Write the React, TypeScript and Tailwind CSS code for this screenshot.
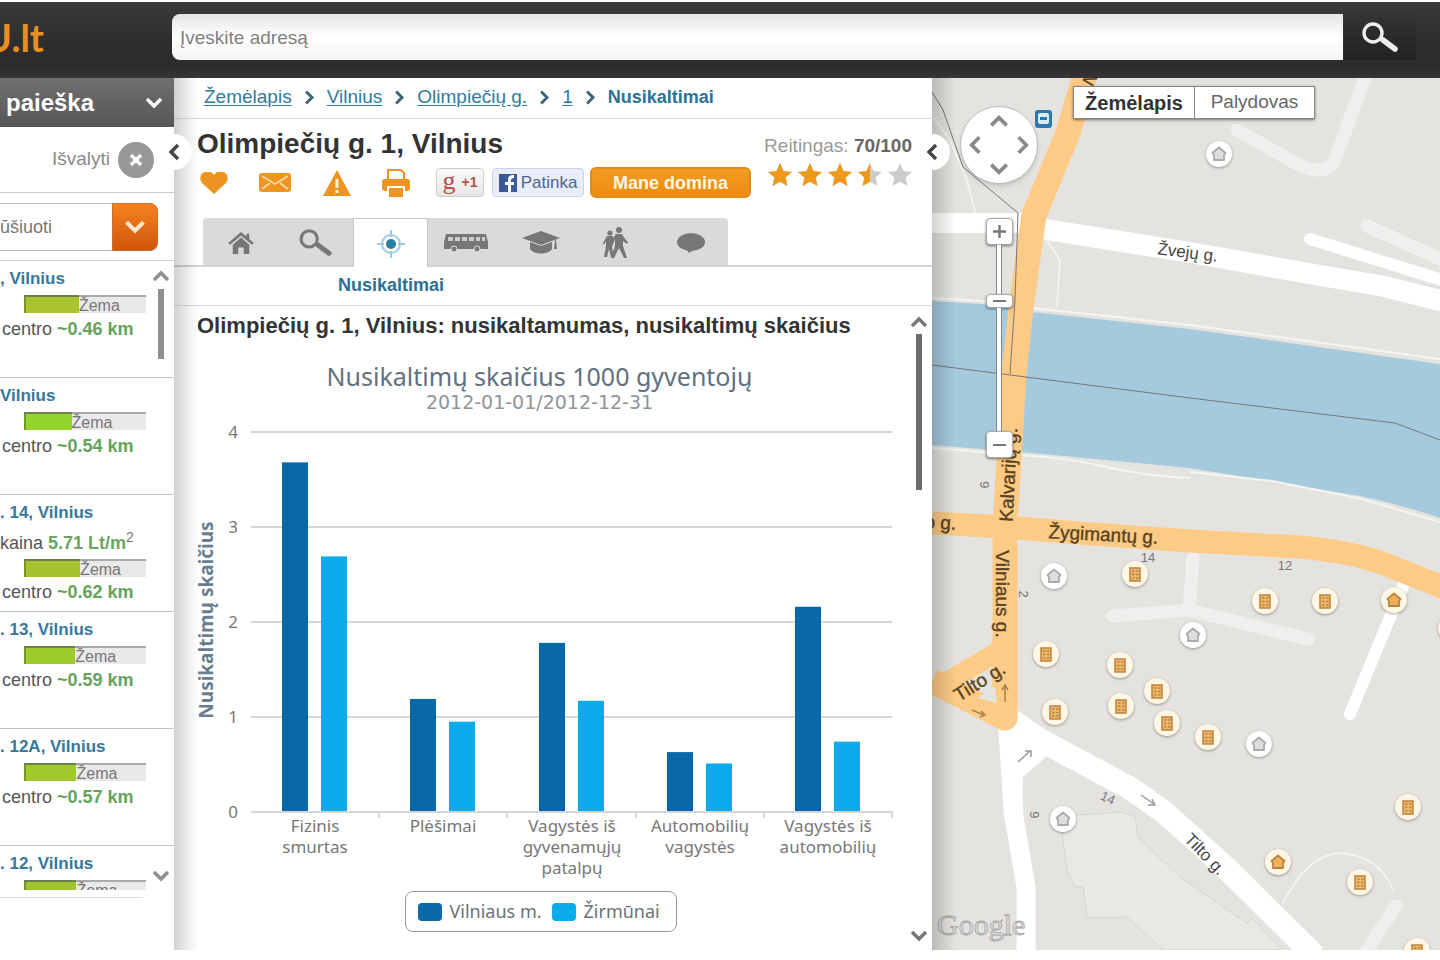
import type { ReactNode } from 'react'

interface Listing {
  title: string
  price?: string
  distance: string
  level: number
  color: string
}

const listings: Listing[] = [
  { title: ', Vilnius', distance: '~0.46 km', level: 45, color: '#aac42e' },
  { title: 'Vilnius', distance: '~0.54 km', level: 39, color: '#93d52c' },
  { title: '. 14, Vilnius', price: '5.71 Lt/m', distance: '~0.62 km', level: 46, color: '#a6c32f' },
  { title: '. 13, Vilnius', distance: '~0.59 km', level: 42, color: '#9ccb2c' },
  { title: '. 12A, Vilnius', distance: '~0.57 km', level: 43, color: '#9fc92d' },
  { title: '. 12, Vilnius', distance: '', level: 43, color: '#9fc42f' },
]

const crimes = [
  { label: ['Fizinis', 'smurtas'], city: 3.67, district: 2.68 },
  { label: ['Plėšimai'], city: 1.18, district: 0.94 },
  { label: ['Vagystės iš', 'gyvenamųjų', 'patalpų'], city: 1.77, district: 1.16 },
  { label: ['Automobilių', 'vagystės'], city: 0.62, district: 0.5 },
  { label: ['Vagystės iš', 'automobilių'], city: 2.15, district: 0.73 },
]

type PinKind = 'flat' | 'house' | 'sold'

const pins: { x: number; y: number; kind: PinKind }[] = [
  { x: 287, y: 76, kind: 'sold' },
  { x: 122, y: 498, kind: 'sold' },
  { x: 203, y: 496, kind: 'flat' },
  { x: 333, y: 523, kind: 'flat' },
  { x: 393, y: 523, kind: 'flat' },
  { x: 462, y: 522, kind: 'house' },
  { x: 261, y: 557, kind: 'sold' },
  { x: 114, y: 576, kind: 'flat' },
  { x: 188, y: 587, kind: 'flat' },
  { x: 225, y: 613, kind: 'flat' },
  { x: 189, y: 628, kind: 'flat' },
  { x: 123, y: 634, kind: 'flat' },
  { x: 235, y: 645, kind: 'flat' },
  { x: 276, y: 659, kind: 'flat' },
  { x: 327, y: 666, kind: 'sold' },
  { x: 476, y: 729, kind: 'flat' },
  { x: 131, y: 741, kind: 'sold' },
  { x: 346, y: 784, kind: 'house' },
  { x: 428, y: 804, kind: 'flat' },
  { x: 485, y: 873, kind: 'flat' },
  { x: 519, y: 550, kind: 'flat' },
]

function Chevron({ dir, size = 18, className = '' }: { dir: 'up' | 'down' | 'left' | 'right'; size?: number; className?: string }) {
  const paths = {
    up: 'M3 14l7-7 7 7',
    down: 'M3 6l7 7 7-7',
    left: 'M14 3l-7 7 7 7',
    right: 'M6 3l7 7-7 7',
  }
  return (
    <svg width={size} height={size} viewBox="0 0 20 20" fill="none" stroke="currentColor" strokeWidth="3.4" className={`shrink-0 ${className}`} aria-hidden="true">
      <path d={paths[dir]} />
    </svg>
  )
}

function Magnifier({ className = '' }: { className?: string }) {
  return (
    <svg viewBox="0 0 36 30" fill="none" stroke="currentColor" className={className} aria-hidden="true">
      <circle cx="11" cy="11" r="9" strokeWidth="3.4" />
      <path d="M18 16l4 3" strokeWidth="3.4" />
      <path d="M21 18l12 9" strokeWidth="5.6" strokeLinecap="round" />
    </svg>
  )
}

function Header() {
  return (
    <header className="flex h-[76px] shrink-0 items-start bg-linear-to-b from-[#3b3b3b] via-[#2e2e2e] to-[#2b2b2b] pt-3 shadow-[inset_0_-12px_8px_-8px_#3a3a3a]">
      <div className="flex w-[172px] shrink-0">
        <a href="#home" className="flex w-[44px] justify-end overflow-hidden font-[Lato,sans-serif] text-[38px] leading-[46px] font-bold text-[#e98e22]">
          U.lt
        </a>
      </div>
      <form className="flex min-w-0 flex-1 pr-6" onSubmit={(e) => e.preventDefault()}>
        <input
          type="text"
          aria-label="Adresas"
          placeholder="Įveskite adresą"
          className="h-[46px] min-w-0 flex-1 rounded-l-lg bg-linear-to-b from-[#e4e4e4] via-white to-[#f4f4f4] px-2 pt-[2px] text-[19px] text-gray-700 placeholder:text-[#808080]"
        />
        <button type="submit" aria-label="Ieškoti" className="ml-px flex h-[46px] w-[72px] items-center rounded-r bg-linear-to-b from-[#333] to-[#222] pl-[18px] text-[#eee]">
          <Magnifier className="h-[30px] w-9" />
        </button>
      </form>
    </header>
  )
}

function ListingRow({ item }: { item: Listing }) {
  return (
    <li className="h-[117px] shrink-0 border-b border-[#c4c4c4] text-[18px] leading-5 whitespace-nowrap text-[#555]">
      <a href="#listing" className="block pt-2 text-[17px] leading-5 font-bold text-[#36789c]">{item.title}</a>
      {item.price && (
        <p className="flex h-[30px] items-end">
          <span>kaina&nbsp;</span>
          <b className="text-[#6aa55f]">{item.price}<sup className="text-[14px] font-normal text-[#777]">2</sup></b>
        </p>
      )}
      <div className="mt-[6px] ml-6 flex h-[18px] w-[122px] border-t-2 border-[#aaa] bg-[#e9e9e9]">
        <div className="h-full border-l-2 border-black/25 shadow-[0_-2px_0_rgba(60,90,0,0.55)]" style={{ width: `${item.level}%`, backgroundColor: item.color }} />
        <span className="text-[16px] leading-[17px] text-[#777]">Žema</span>
      </div>
      {item.distance && (
        <p className={`pl-[2px] ${item.price ? 'mt-[5px]' : 'mt-[6px]'}`}>
          centro <b className="text-[#64a35a]">{item.distance}</b>
        </p>
      )}
    </li>
  )
}

function Sidebar() {
  return (
    <aside className="flex min-h-0 flex-col overflow-hidden bg-white">
      <button type="button" className="flex h-[49px] shrink-0 items-center justify-between bg-linear-to-b from-[#707070] to-[#565656] pr-[10px] pl-[6px] text-[24px] font-bold text-white">
        paieška
        <Chevron dir="down" size={20} />
      </button>
      <div className="flex h-[66px] shrink-0 items-center justify-end border-b border-[#ccc] pr-5">
        <button type="button" className="flex items-center gap-2 text-[19px] text-[#8a8a8a]">
          Išvalyti
          <span className="flex size-9 items-center justify-center rounded-full bg-[#989898]">
            <svg width="12" height="12" viewBox="0 0 12 12" stroke="#fff" strokeWidth="3.4" aria-hidden="true">
              <path d="M1 1l10 10M11 1L1 11" />
            </svg>
          </span>
        </button>
      </div>
      <div className="flex h-[68px] shrink-0 border-b border-[#d0d0d0] pt-[10px]">
        <div className="relative -ml-4 h-[48px] w-[174px]">
          <select aria-label="Rūšiuoti" className="h-full w-full appearance-none rounded-r-lg border border-[#bbb] bg-white pl-[2px] text-[18px] text-[#777]">
            <option>Rūšiuoti</option>
          </select>
          <span className="pointer-events-none absolute inset-y-0 right-0 flex w-[46px] items-center justify-center rounded-r-lg border border-[#c9702a] bg-linear-to-b from-[#f58220] to-[#cf560c] text-[#ffe9cc]">
            <Chevron dir="down" size={24} />
          </span>
        </div>
      </div>
      <div className="relative min-h-0 flex-1 overflow-hidden">
        <ul className="flex flex-col">
          {listings.map((item) => (
            <ListingRow key={item.title} item={item} />
          ))}
        </ul>
        <div className="absolute inset-y-0 right-1 flex w-[18px] flex-col items-center justify-between pt-[5px] pb-1 text-[#8f8f8f]">
          <div className="flex flex-col items-center gap-[3px]">
            <Chevron dir="up" size={20} />
            <div className="h-[70px] w-[6px] bg-[#8f8f8f]" />
          </div>
          <Chevron dir="down" size={20} />
        </div>
      </div>
      <div className="h-[60px] shrink-0 pt-[7px]">
        <div className="mr-[31px] border-t border-[#ddd]" />
      </div>
    </aside>
  )
}

function CollapseHandle({ label }: { label: string }) {
  return (
    <button type="button" aria-label={label} className="absolute top-[56px] -left-[18px] z-20 flex size-9 items-center justify-center rounded-full bg-white text-[#444]">
      <Chevron dir="left" size={20} />
    </button>
  )
}

function EdgeShadow() {
  return <div className="pointer-events-none absolute inset-y-0 left-0 z-10 w-6 bg-linear-to-r from-black/18 to-transparent" />
}

function Breadcrumbs() {
  const items = ['Žemėlapis', 'Vilnius', 'Olimpiečių g.', '1']
  return (
    <nav className="flex h-[41px] shrink-0 items-center gap-[9px] border-b border-[#ddd] pb-[2px] pl-[30px] text-[19px] whitespace-nowrap text-[#2f7b9b]">
      {items.map((item) => (
        <span key={item} className="flex items-center gap-[9px]">
          <a href="#crumb" className="underline underline-offset-2">{item}</a>
          <Chevron dir="right" size={17} className="text-[#3d6478]" />
        </span>
      ))}
      <b className="text-[18px] text-[#2a7396]">Nusikaltimai</b>
    </nav>
  )
}

const STAR = 'M12 0l3.5 8 8.500.9-6.400 5.700 1.900 8.400L12 18.700 4.500 23l1.900-8.400L0 8.900 8.500 8z'

function Rating() {
  return (
    <div className="flex flex-col items-end gap-[5px] pt-[15px]">
      <p className="text-[19px] leading-6 text-[#999]">
        Reitingas: <b className="text-[#666]">70/100</b>
      </p>
      <div className="flex gap-[6px]" role="img" aria-label="3.5 / 5">
        {[1, 1, 1, 0.5, 0].map((fill, i) => (
          <svg key={i} width="24" height="24" viewBox="0 0 24 24" aria-hidden="true">
            <path d={STAR} fill="#ccc" />
            {fill > 0 && <path d={fill === 1 ? STAR : 'M12 0v18.700L4.500 23l1.900-8.400L0 8.900 8.500 8z'} fill="#ee991c" />}
          </svg>
        ))}
      </div>
    </div>
  )
}

function Actions() {
  return (
    <div className="flex h-[31px] items-center">
      <div className="flex w-[239px] items-center justify-between pr-[26px] pl-[3px] text-[#ee9420]">
        <button type="button" aria-label="Įsiminti">
          <svg width="28" height="24" viewBox="0 0 28 24" fill="currentColor"><path d="M14 23L2 12C-1 8 0 2 5 1h5c2 0 3 2 4 3 1-1 2-3 4-3h5c5 1 6 7 3 11z" /></svg>
        </button>
        <button type="button" aria-label="Siųsti">
          <svg width="32" height="19" viewBox="0 0 32 19"><rect width="32" height="19" rx="3" fill="currentColor" /><path d="M3 3l13 8 13-8M3 16l8-6M29 16l-8-6" fill="none" stroke="#ffd9a0" strokeWidth="1.8" /></svg>
        </button>
        <button type="button" aria-label="Pranešti">
          <svg width="28" height="26" viewBox="0 0 28 26"><path d="M14 0l14 26H0z" fill="currentColor" /><path d="M14 9v9M14 20v3" stroke="#fff0d0" strokeWidth="3" /></svg>
        </button>
        <button type="button" aria-label="Spausdinti">
          <svg width="28" height="30" viewBox="0 0 28 30"><path d="M6 12V2h13l3 3v7" fill="#fff" stroke="currentColor" strokeWidth="2" /><rect y="11" width="28" height="12" rx="3" fill="currentColor" /><rect x="5" y="18" width="18" height="12" fill="#fff" /><rect x="7" y="20" width="14" height="9" fill="currentColor" /></svg>
        </button>
      </div>
      <button type="button" className="mr-2 flex h-[29px] w-[48px] items-center justify-center gap-[6px] rounded border border-[#ccc] bg-linear-to-b from-[#fafafa] to-[#e6e6e6] text-[14px] font-bold text-[#b2504a]">
        <span className="pb-1 font-['Liberation_Serif',serif] text-[26px] leading-6 font-normal">g</span>+1
      </button>
      <button type="button" className="mr-[6px] flex h-[29px] w-[92px] items-center justify-center gap-1 rounded border border-[#ccd4e8] bg-[#e9edf8] text-[17px] text-[#4f6395]">
        <svg width="18" height="18" viewBox="0 0 18 18" aria-hidden="true"><rect width="18" height="18" fill="#3b5998" /><path d="M12 18v-7h3v-3h-3V6c0-1 1-2 3-2V1c-4 0-6 1-6 5v2H6v3h3v7z" fill="#fff" /></svg>
        Patinka
      </button>
      <button type="button" className="h-[31px] w-[161px] rounded-md border-2 border-[#e08a1c] bg-linear-to-b from-[#f49c22] to-[#ee8c0c] text-[18px] leading-6 font-bold text-[#fff6e2]">
        Mane domina
      </button>
    </div>
  )
}

function TabIcon({ name }: { name: string }): ReactNode {
  switch (name) {
    case 'home':
      return <svg width="26" height="22" viewBox="0 0 28 24" fill="currentColor"><path d="M14 0L0 12l2 2L14 4l12 10 2-2-5-4.500V2h-3v3z" /><path d="M14 6L5 14v10h6v-7h6v7h6V14z" /></svg>
    case 'search':
      return <Magnifier className="h-[27px] w-[33px]" />
    case 'crime':
      return <svg width="28" height="28" viewBox="0 0 28 28" fill="none" stroke="#9dcbe3" strokeWidth="2"><circle cx="14" cy="14" r="9" /><path d="M14 0v7M14 21v7M0 14h7M21 14h7" /><circle cx="14" cy="14" r="5" fill="#2b7ea6" stroke="none" /></svg>
    case 'transport':
      return <svg width="44" height="18" viewBox="0 0 44 18"><path d="M2 0h40l2 8v7H0V8z" fill="currentColor" /><path d="M4 3h5v4H4zM11 3h5v4h-5zM18 3h5v4h-5zM25 3h5v4h-5zM32 3h4v4h-4zM38 3h3v4h-3z" fill="#ccc" /><g fill="currentColor" stroke="#ddd"><circle cx="10" cy="15" r="3" /><circle cx="33" cy="15" r="3" /></g></svg>
    case 'school':
      return <svg width="38" height="24" viewBox="0 0 38 24" fill="currentColor"><path d="M19 0l19 7-19 7L0 7z" /><path d="M8 11l11 4 11-4v7c-4 6-18 6-22 0z" /><path d="M33 9h1l1 9h-3z" /></svg>
    case 'people':
      return <svg width="26" height="32" viewBox="0 0 26 32" fill="currentColor"><circle cx="16" cy="3" r="3" /><path d="M13 7h6l3 5 3 3-1 2-4-3v5l4 12h-3l-5-10-5 10H8l4-12V13l-3 4-2-1z" /><circle cx="7" cy="6" r="2.600" /><path d="M4 9h6l1 6-2 5 2 10H8L6 22 4 30H1l2-11v-5l-2 4-1-2z" /></svg>
    default:
      return <svg width="28" height="20" viewBox="0 0 28 20" fill="currentColor"><ellipse cx="14" cy="9" rx="14" ry="9" /><path d="M9 15l9 1-6 4z" /></svg>
  }
}

function Tabs() {
  const tabs = [
    { id: 'home', label: 'Apžvalga' },
    { id: 'search', label: 'Paieška' },
    { id: 'crime', label: 'Nusikaltimai' },
    { id: 'transport', label: 'Transportas' },
    { id: 'school', label: 'Mokyklos' },
    { id: 'people', label: 'Gyventojai' },
    { id: 'comments', label: 'Komentarai' },
  ]
  return (
    <div className="flex h-[49px] shrink-0 border-b-2 border-[#d4d4d4] pl-[29px]" role="tablist">
      {tabs.map((tab, i) => (
        <button
          key={tab.id}
          type="button"
          role="tab"
          aria-label={tab.label}
          aria-selected={tab.id === 'crime'}
          className={`flex w-[75px] items-center justify-center pt-[2px] text-[#777] ${
            tab.id === 'crime' ? 'h-[49px] border border-b-0 border-[#c8c8c8] bg-white' : 'h-[47px] bg-[#dadada]'
          } ${i === 0 ? 'rounded-tl' : ''} ${i === tabs.length - 1 ? 'rounded-tr' : ''}`}
        >
          <TabIcon name={tab.id} />
        </button>
      ))}
    </div>
  )
}

const CHART_LEFT = 54
const CHART_RIGHT = 695
const BASELINE = 396
const UNIT = 95

function Chart() {
  const step = (CHART_RIGHT - CHART_LEFT) / crimes.length
  return (
    <svg viewBox="0 0 709 472" className="block w-full font-['Noto_Sans',sans-serif]" role="img" aria-label="Nusikaltimų skaičius">
      {[4, 3, 2, 1, 0].map((n) => (
        <g key={n}>
          <line x1={CHART_LEFT} x2={CHART_RIGHT} y1={BASELINE - n * UNIT + 1} y2={BASELINE - n * UNIT + 1} stroke="#d6d6d6" strokeWidth="2" />
          <text x="36" y={BASELINE - n * UNIT + 7} textAnchor="middle" fontSize="17" fill="#777">{n}</text>
        </g>
      ))}
      <text transform="translate(16 205) rotate(-90)" textAnchor="middle" fontSize="19" fontWeight="bold" fill="#6a7d90">
        Nusikaltimų skaičius
      </text>
      {crimes.map((c, i) => {
        const center = Math.round(CHART_LEFT + step * (i + 0.5))
        return (
          <g key={i}>
            <rect x={center - 33} y={BASELINE - c.city * UNIT} width="26" height={c.city * UNIT} fill="#0a69a8" />
            <rect x={center + 6} y={BASELINE - c.district * UNIT} width="26" height={c.district * UNIT} fill="#0aabea" />
            <path d={`M${Math.round(CHART_LEFT + step * (i + 1))} ${BASELINE}v7`} stroke="#d6d6d6" strokeWidth="2" />
            <text textAnchor="middle" fontSize="17" fill="#777">
              {c.label.map((line, n) => (
                <tspan key={line} x={center} y={417 + n * 21}>{line}</tspan>
              ))}
            </text>
          </g>
        )
      })}
    </svg>
  )
}

function Details() {
  return (
    <main className="relative flex min-h-0 flex-col bg-white">
      <EdgeShadow />
      <CollapseHandle label="Suskleisti sąrašą" />
      <Breadcrumbs />
      <section className="flex h-[99px] shrink-0 justify-between pr-[20px] pl-[23px]">
        <div className="pt-[9px]">
          <h1 className="mb-[7px] text-[28px] leading-8 font-bold whitespace-nowrap text-[#333]">Olimpiečių g. 1, Vilnius</h1>
          <Actions />
        </div>
        <Rating />
      </section>
      <Tabs />
      <div className="flex h-[39px] shrink-0 items-center border-b border-[#ddd] pb-[2px] pl-[164px]">
        <b className="text-[18px] text-[#2c7093]">Nusikaltimai</b>
      </div>
      <section className="flex min-h-0 flex-1 overflow-hidden">
        <div className="min-w-0 flex-1 pl-[23px]">
          <h2 className="pt-[7px] text-[22px] leading-[26px] font-bold whitespace-nowrap text-[#333]">
            Olimpiečių g. 1, Vilnius: nusikaltamumas, nusikaltimų skaičius
          </h2>
          <div className="pt-[22px] pr-[24px] text-center font-['Noto_Sans',sans-serif]">
            <h3 className="text-[25px] leading-[30px] text-[#62717f]">Nusikaltimų skaičius 1000 gyventojų</h3>
            <p className="pb-[2px] font-['DejaVu_Sans',sans-serif] text-[19px] leading-[22px] text-[#8f9499]">2012-01-01/2012-12-31</p>
          </div>
          <Chart />
          <div className="flex justify-center pt-1 pr-[22px]">
            <ul className="flex h-[41px] w-[272px] items-center gap-[10px] rounded-lg border border-[#999] pl-3 font-['Noto_Sans',sans-serif] text-[18px] text-[#6b7278]">
              <li className="flex items-center gap-2"><span className="h-[18px] w-6 rounded-sm bg-[#0a69a8]" />Vilniaus m.</li>
              <li className="flex items-center gap-2"><span className="h-[18px] w-6 rounded-sm bg-[#0aabea]" />Žirmūnai</li>
            </ul>
          </div>
        </div>
        <div className="flex w-[26px] shrink-0 flex-col items-center justify-between py-1 text-[#777]">
          <div className="flex flex-col items-center gap-[2px] pt-[2px]">
            <Chevron dir="up" size={20} />
            <div className="h-[156px] w-[6px] bg-[#6c6c6c]" />
          </div>
          <Chevron dir="down" size={20} />
        </div>
      </section>
    </main>
  )
}

function Pin({ kind }: { kind: PinKind }) {
  const stroke = kind === 'sold' ? '#aaa' : '#b98242'
  return (
    <svg width="26" height="26" viewBox="0 0 26 26" aria-hidden="true">
      {kind === 'flat' ? (
        <g stroke={stroke} strokeWidth="1.500">
          <rect x="8" y="7" width="10" height="13" fill="#efb868" />
          <path d="M10 10h2.500M14 10h2.500M10 13.500h2.500M14 13.500h2.500M10 17h2.500M14 17h2.500" />
        </g>
      ) : (
        <path d="M13 6.500l6.500 5.500-1.500 2V19H8v-5l-1.500-2z" fill={kind === 'sold' ? '#ddd' : '#efb057'} stroke={stroke} strokeWidth="1.800" strokeLinejoin="round" />
      )}
    </svg>
  )
}

function MapCanvas() {
  return (
    <svg className="absolute inset-0 h-full w-full font-['Liberation_Sans',Arial,sans-serif]" fill="none" aria-hidden="true">
      <path d="M0 223L50 226 100 234 258 251 508 286V440Q470 427 428 418L258 390 100 375 0 367z" fill="#a5cade" />
      <path d="M0 220L50 223 100 230 258 247 508 281M0 370L100 378Q140 381 170 388 220 399 258 400M258 394L340 403 430 421 508 444" stroke="#f5f4f1" strokeWidth="2" />
      <path d="M145 737L190 734 203 739 206 759 248 799 291 829 315 845 320 840 351 872H231L195 839 155 840 151 809 143 809 135 792 130 755z" fill="#e8e8e4" stroke="#d6d4d0" />
      <g stroke="#f0efee" strokeWidth="13" strokeLinecap="round" strokeLinejoin="round">
        <path d="M305 52L365 86Q393 100 403 82L412 57 432 2M435 148L508 181M261 480L257 532M181 538L257 532 376 561M464 828L432 876" />
      </g>
      <path d="M351 825Q375 777 408 775 448 778 461 812M1 39L18 62 35 102 43 135M113 160L128 182 125 229" stroke="#f4f3f0" strokeWidth="2" />
      <g stroke="#fff" strokeLinejoin="round">
        <path d="M0 145H96" strokeWidth="20" />
        <path d="M105 150L255 174 380 196 450 208 510 223" strokeWidth="21" />
        <path d="M378 161L510 202M471 508L418 636" strokeWidth="12" strokeLinecap="round" />
        <path d="M76 640L108 662 198 710 232 734 291 787 383 878" strokeWidth="23" />
        <path d="M78 660L82 739 94 809V880" strokeWidth="19" />
        <path d="M66 645L80 636 116 677 91 699 90 740 72 740z" fill="#fff" stroke="none" />
      </g>
      <g stroke="#fdcb85" strokeLinejoin="round">
        <path d="M0 445L73 449 160 456 258 463 368 469Q420 474 450 485L515 511" strokeWidth="23" />
        <path d="M155 -10L136 55 102 137 90 222 82 295 76 400 73 450V640L0 603" strokeWidth="25" />
        <path d="M10 607L72 570" strokeWidth="20" />
      </g>
      <path d="M45 620L63 609 65 625z" fill="#e5e3df" />
      <g stroke="#777" strokeWidth="1">
        <path d="M0 14L11 32 31 89 86 135 83 222 78 296M0 287L258 320 463 345 508 362" />
      </g>
      <g stroke="#a8834f" strokeWidth="1.500">
        <path d="M73 624V608M70 612L73 607 76 612M40 632L52 637M49 633L53 637 48 639" />
      </g>
      <g stroke="#999" strokeWidth="1.500">
        <path d="M86 684L98 673M93 673H99V679M209 717L222 726M220 721L223 727 216 727" />
      </g>
      <g fill="#5b431f" fontSize="19" textAnchor="middle" stroke="#5b431f" strokeWidth="0.400">
        <text transform="translate(171 463) rotate(3)">Žygimantų g.</text>
        <text transform="translate(83 397) rotate(-87)">Kalvarijų g.</text>
        <text transform="translate(64 516) rotate(90)">Vilniaus g.</text>
        <text transform="translate(51 609) rotate(-32)">Tilto g.</text>
        <text transform="translate(8 451) rotate(3)">o g.</text>
        <text transform="translate(163 4) rotate(-60)" fontSize="17">N</text>
      </g>
      <g fill="#444" fontSize="17" textAnchor="middle">
        <text transform="translate(255 180) rotate(7)">Žvejų g.</text>
        <text transform="translate(269 780) rotate(46)">Tilto g.</text>
      </g>
      <g fill="#777" fontSize="13" textAnchor="middle">
        <text x="216" y="484">14</text>
        <text x="353" y="492">12</text>
        <text transform="translate(87 516) rotate(90)">2</text>
        <text transform="translate(57 407) rotate(-90)">6</text>
        <text transform="translate(174 724) rotate(25)">14</text>
        <text transform="translate(107 737) rotate(-90)">6</text>
      </g>
      <text x="5" y="857" fontSize="30" className="font-['Liberation_Serif',serif]" fill="#dcdcdc" stroke="#a5a5a5" strokeWidth="0.800">Google</text>
    </svg>
  )
}

function MapControls() {
  const small = 'flex w-[27px] items-center justify-center rounded-sm border border-[#aaa] bg-white text-[#777] shadow-sm shadow-black/40'
  return (
    <div className="absolute top-[28px] left-[28px] z-20 flex w-[78px] flex-col items-center">
      <div className="mb-[34px] grid size-[78px] grid-cols-3 grid-rows-3 place-items-center rounded-full border border-[#bbb] bg-white p-[2px] text-[#8a8a8a] shadow-md">
        <button type="button" aria-label="Aukštyn" className="col-start-2"><Chevron dir="up" size={22} /></button>
        <button type="button" aria-label="Kairėn" className="col-start-1 row-start-2"><Chevron dir="left" size={22} /></button>
        <button type="button" aria-label="Dešinėn" className="col-start-3 row-start-2"><Chevron dir="right" size={22} /></button>
        <button type="button" aria-label="Žemyn" className="col-start-2 row-start-3"><Chevron dir="down" size={22} /></button>
      </div>
      <button type="button" aria-label="Priartinti" className={`h-[27px] ${small}`}>
        <svg width="13" height="13" viewBox="0 0 13 13" stroke="currentColor" strokeWidth="2.400"><path d="M0 6.500h13M6.500 0v13" /></svg>
      </button>
      <div className="h-[49px] w-[6px] border-x border-[#888] bg-white" />
      <button type="button" aria-label="Mastelis" className={`h-[14px] ${small}`}>
        <span className="h-[2px] w-[13px] bg-[#777]" />
      </button>
      <div className="h-[123px] w-[6px] border-x border-[#888] bg-white" />
      <button type="button" aria-label="Nutolinti" className={`h-[27px] ${small}`}>
        <span className="h-[2px] w-[13px] bg-[#777]" />
      </button>
    </div>
  )
}

function MapView() {
  return (
    <section className="relative min-h-0 bg-[#e5e3df]" aria-label="Žemėlapis">
      <div className="absolute inset-0 overflow-hidden">
        <MapCanvas />
        {pins.map((pin) => (
          <button
            key={`${pin.x}-${pin.y}`}
            type="button"
            aria-label="Objektas"
            className={`absolute -mt-[13px] -ml-[13px] size-[26px] rounded-full shadow-[0_1px_3px_rgba(0,0,0,0.35)] ${pin.kind === 'sold' ? 'bg-white' : 'bg-[#fff7e3]'}`}
            style={{ left: pin.x, top: pin.y }}
          >
            <Pin kind={pin.kind} />
          </button>
        ))}
        <svg className="absolute top-[32px] left-[103px]" width="17" height="18" viewBox="0 0 17 18" aria-hidden="true">
          <rect width="17" height="18" rx="3" fill="#2f77ad" />
          <rect x="3" y="3" width="11" height="11" rx="2" fill="#d8ecfa" />
          <path d="M5 7h7v3H5zM4 14h2v2H4zM11 14h2v2h-2z" fill="#2f77ad" />
        </svg>
      </div>
      <EdgeShadow />
      <CollapseHandle label="Suskleisti informaciją" />
      <MapControls />
      <div className="absolute top-[8px] left-[141px] z-10 flex h-[33px] border border-[#888] bg-white text-[19px] shadow-sm shadow-black/40">
        <button type="button" className="w-[121px] border-r border-[#888] text-[20px] font-bold text-[#333]">Žemėlapis</button>
        <button type="button" className="w-[119px] text-[#666]">Palydovas</button>
      </div>
    </section>
  )
}

export default function App() {
  return (
    <div className="flex h-screen min-h-[800px] flex-col overflow-hidden bg-white pt-[2px] pb-[10px] font-['Liberation_Sans',Arial,sans-serif]">
      <Header />
      <div className="grid min-h-0 flex-1 grid-cols-[174px_minmax(0,758fr)_minmax(0,508fr)] grid-rows-[minmax(0,1fr)]">
        <Sidebar />
        <Details />
        <MapView />
      </div>
    </div>
  )
}
